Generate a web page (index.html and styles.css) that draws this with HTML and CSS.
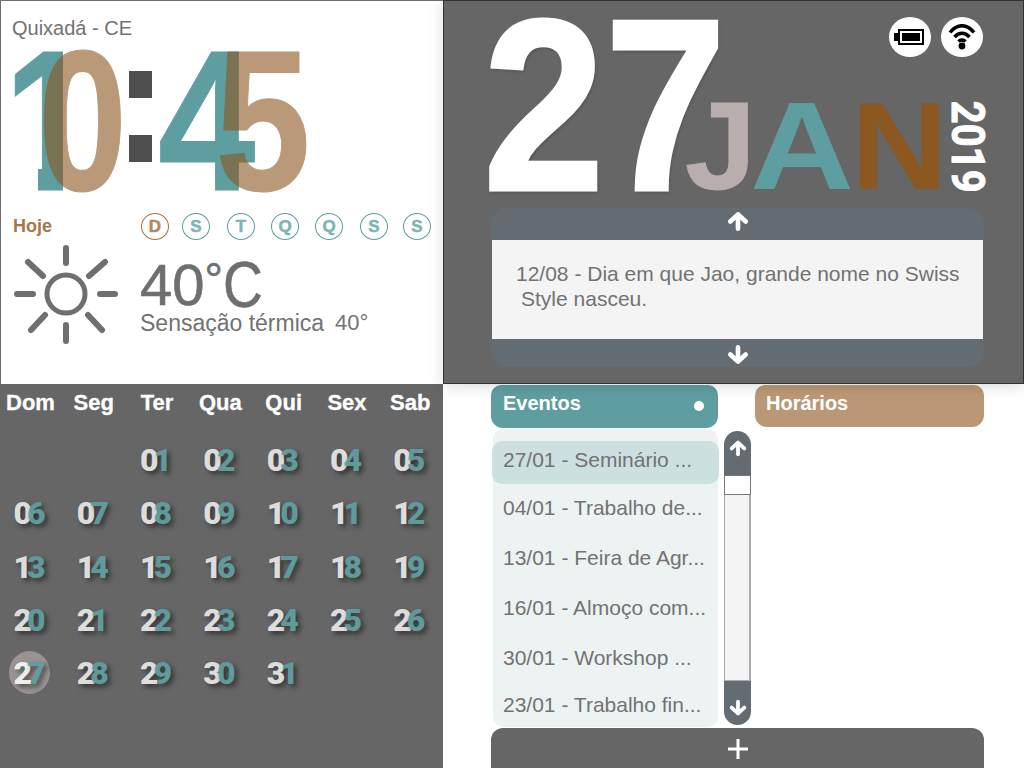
FILE: index.html
```html
<!DOCTYPE html>
<html lang="pt">
<head>
<meta charset="utf-8">
<title>Painel</title>
<link rel="stylesheet" href="styles.css">
</head>
<body>
<main class="page">
  <section class="clock">
    <div class="place">Quixadá - CE</div>
    <div class="time">
      <span class="digit d1 teal">1</span><span class="digit d2 tan">0</span><span class="colon"><i></i><i></i></span><span class="digit d4 teal">4</span><span class="digit d5 tan">5</span>
    </div>
    <div class="days">
      <span class="today">Hoje</span>
      <div class="day-list">
        <span class="day on">D</span><span class="day">S</span><span class="day">T</span><span class="day">Q</span><span class="day">Q</span><span class="day">S</span><span class="day">S</span>
      </div>
    </div>
    <div class="weather">
      <svg class="sun" width="106" height="102" viewBox="0 0 106 102" fill="none" stroke="#6f6f6f" stroke-linecap="round">
        <circle cx="53" cy="51" r="19" stroke-width="5"/>
        <path stroke-width="6" d="M53 5V20M53 82V98M4 51H20M87 51H102M15 19L30 33M92 19L76 33M32 72L18 87M75 72L89 87"/>
      </svg>
      <div class="temps">
        <div class="temp"><span>40</span><span class="deg">°</span><span class="cel">C</span></div>
        <div class="feel"><span>Sensação térmica</span><span class="feel-val">40°</span></div>
      </div>
    </div>
  </section>

  <section class="today-panel">
    <div class="date-row">
      <div class="date-num">27</div>
      <div class="date-side">
        <div class="status">
          <span class="badge">
            <svg width="32" height="18" viewBox="0 0 32 18"><path d="M0 5h4V1h26v16H4v-4H0z" fill="#000"/><rect x="6" y="3" width="22" height="12" fill="#fff"/><rect x="8" y="5" width="18" height="8" fill="#000"/></svg>
          </span>
          <span class="badge">
            <svg width="28" height="26" viewBox="0 0 28 26" fill="none" stroke="#000" stroke-width="3.6"><path d="M2 8.500C9-.5 19-.5 26 8.500M6.500 13C11 8 17 8 21.500 13M10.500 17.500C12.500 15.500 15.500 15.500 17.500 17.500"/><circle cx="14" cy="22" r="3.400" fill="#000" stroke="none"/></svg>
          </span>
        </div>
        <div class="month-row">
          <div class="month"><span class="m-j">J</span><span class="m-a">A</span><span class="m-n">N</span></div>
          <div class="year">2019</div>
        </div>
      </div>
    </div>
    <div class="note">
      <div class="note-cap top">
        <svg class="arrow" width="22" height="20" viewBox="0 0 20 18" fill="none" stroke="#fff" stroke-width="4.200" stroke-linecap="round" stroke-linejoin="round"><path d="M10 16V3M3 9.500L10 3l7 6.500"/></svg>
      </div>
      <p class="note-text">12/08 - Dia em que Jao, grande nome no Swiss<br><span class="indent">Style nasceu.</span></p>
      <div class="note-cap bottom">
        <svg class="arrow" width="22" height="20" viewBox="0 0 20 18" fill="none" stroke="#fff" stroke-width="4.200" stroke-linecap="round" stroke-linejoin="round"><path d="M10 2V15M3 8.500L10 15l7-6.500"/></svg>
      </div>
    </div>
  </section>

  <section class="calendar">
    <div class="cal-grid head">
      <span>Dom</span><span>Seg</span><span>Ter</span><span>Qua</span><span>Qui</span><span>Sex</span><span>Sab</span>
    </div>
    <div class="cal-grid dates">
      <span></span><span></span>
      <span class="n"><b>0</b><b>1</b></span><span class="n"><b>0</b><b>2</b></span><span class="n"><b>0</b><b>3</b></span><span class="n"><b>0</b><b>4</b></span><span class="n"><b>0</b><b>5</b></span>
      <span class="n"><b>0</b><b>6</b></span><span class="n"><b>0</b><b>7</b></span><span class="n"><b>0</b><b>8</b></span><span class="n"><b>0</b><b>9</b></span><span class="n"><b>1</b><b>0</b></span><span class="n"><b>1</b><b>1</b></span><span class="n"><b>1</b><b>2</b></span>
      <span class="n"><b>1</b><b>3</b></span><span class="n"><b>1</b><b>4</b></span><span class="n"><b>1</b><b>5</b></span><span class="n"><b>1</b><b>6</b></span><span class="n"><b>1</b><b>7</b></span><span class="n"><b>1</b><b>8</b></span><span class="n"><b>1</b><b>9</b></span>
      <span class="n"><b>2</b><b>0</b></span><span class="n"><b>2</b><b>1</b></span><span class="n"><b>2</b><b>2</b></span><span class="n"><b>2</b><b>3</b></span><span class="n"><b>2</b><b>4</b></span><span class="n"><b>2</b><b>5</b></span><span class="n"><b>2</b><b>6</b></span>
      <span class="n current"><b>2</b><b>7</b></span><span class="n"><b>2</b><b>8</b></span><span class="n"><b>2</b><b>9</b></span><span class="n"><b>3</b><b>0</b></span><span class="n"><b>3</b><b>1</b></span>
    </div>
  </section>

  <section class="agenda">
    <div class="tabs">
      <div class="tab events"><span>Eventos</span><i class="dot"></i></div>
      <div class="tab hours"><span>Horários</span></div>
    </div>
    <div class="lists">
      <ul class="event-list">
        <li class="sel">27/01 - Seminário ...</li>
        <li class="second">04/01 - Trabalho de...</li>
        <li>13/01 - Feira de Agr...</li>
        <li>16/01 - Almoço com...</li>
        <li>30/01 - Workshop ...</li>
        <li class="last">23/01 - Trabalho fin...</li>
      </ul>
      <div class="scroll">
        <div class="s-cap up">
          <svg width="18" height="18" viewBox="0 0 20 18" fill="none" stroke="#fff" stroke-width="4.200" stroke-linecap="round" stroke-linejoin="round"><path d="M10 16V3M3 9.500L10 3l7 6.500"/></svg>
        </div>
        <div class="thumb"></div>
        <div class="track"></div>
        <div class="s-cap down">
          <svg width="18" height="18" viewBox="0 0 20 18" fill="none" stroke="#fff" stroke-width="4.200" stroke-linecap="round" stroke-linejoin="round"><path d="M10 2V15M3 8.500L10 15l7-6.500"/></svg>
        </div>
      </div>
    </div>
    <div class="add">
      <svg width="22" height="22" viewBox="0 0 22 22" stroke="#fff" stroke-width="3"><path d="M11 1V21M1 11H21"/></svg>
    </div>
  </section>
</main>
</body>
</html>
```
FILE: styles.css
```css
* { box-sizing: border-box; }
html, body { margin: 0; padding: 0; }
body {
  width: 1024px;
  height: 768px;
  overflow: hidden;
  background: #fff;
  font-family: "Liberation Sans", Arial, sans-serif;
  color: #727272;
}
.page {
  display: grid;
  grid-template-columns: 443px 581px;
  grid-template-rows: 384px 384px;
  width: 1024px;
  height: 768px;
}

/* Clock */
.clock {
  background: #fff;
  border: 1px solid #6f6f6f;
  border-bottom: 0;
  border-right: 0;
  padding: 14px 0 0 11px;
}
.place { font-size: 20px; line-height: 26px; }
.time { display: flex; height: 150px; margin-top: 5px; }
.digit {
  display: block;
  flex: none;
  font-size: 200px;
  line-height: 150px;
  font-weight: 700;
  transform-origin: 0 50%;
  -webkit-text-stroke: 1px currentColor;
}
.teal { color: #5f9ea0; }
.tan { color: #8b5720; opacity: .6; }
.d1 {
  width: 34px;
  margin-left: -8px;
  transform: scaleX(.82);
  clip-path: polygon(0 0, 72px 0, 72px 160px, 41.500px 160px, 41.500px 110px, 0 110px);
}
.d2 { width: 91px; transform: scaleX(.8); }
.colon { display: flex; flex-direction: column; width: 29px; padding-top: 25px; gap: 37px; flex: none; }
.colon i { display: block; width: 23px; height: 27px; background: #4f4f4f; }
.d4 { width: 57px; transform: scaleX(.875); }
.d5 { width: 80px; transform: scaleX(.86); }

.days { display: flex; align-items: center; height: 27px; margin-top: 17px; padding-left: 1px; }
.today { width: 128px; font-size: 18px; font-weight: 700; color: #a9754a; }
.day-list { display: flex; gap: 16px; }
.day {
  display: flex;
  align-items: center;
  justify-content: center;
  flex: none;
  width: 28px;
  height: 27px;
  border: 1px solid #5f9ea0;
  border-radius: 50%;
  font-size: 17px;
  font-weight: 700;
  color: #7fb4b5;
  -webkit-text-stroke: .5px currentColor;
}
.day.on { margin-right: -3px; border-color: #a9703a; color: #b4875c; }
.day:nth-child(3), .day:nth-child(6) { margin-left: 1px; }
.day:nth-child(7) { margin-left: -1px; }

.weather { display: flex; margin-top: 3px; }
.sun { flex: none; margin-left: 1px; }
.temps { margin-left: 21px; padding-top: 14px; }
.temp { display: flex; font-size: 58px; line-height: 56px; color: #6f6f6f; -webkit-text-stroke: .6px #6f6f6f; }
.deg { font-size: 46px; line-height: 46px; width: 18px; }
.cel { font-size: 64px; transform: scaleX(.86); transform-origin: 0 50%; }
.feel { display: flex; gap: 11px; font-size: 23px; line-height: 24px; margin-top: -2px; }
.feel-val { font-size: 22px; }

/* Date */
.today-panel {
  position: relative;
  z-index: 2;
  background: #666;
  border: 1px solid #333;
  padding: 3px 39px 0 39px;
  box-shadow: 0 2px 14px rgba(0,0,0,.15);
}
.date-row { display: flex; height: 200px; }
.date-num {
  flex: none;
  width: 202px;
  font-size: 245px;
  line-height: 203px;
  font-weight: 700;
  color: #fff;
  transform: scaleX(.893);
  transform-origin: 0 50%;
  -webkit-text-stroke: 3px #fff;
  text-shadow: 1px 2px 4px rgba(0,0,0,.3);
}
.date-side { display: flex; flex-direction: column; justify-content: space-between; flex: 1; }
.status { display: flex; justify-content: flex-end; gap: 10px; padding: 13px 0 0; margin-right: 3px; }
.badge {
  display: flex;
  align-items: center;
  justify-content: center;
  width: 42px;
  height: 40px;
  border-radius: 50%;
  background: #fff;
}
.month-row { display: flex; align-items: flex-end; height: 116px; }
.month { display: flex; font-size: 124px; line-height: 116px; font-weight: 700; width: 265px; }
.m-j, .m-a, .m-n { display: block; flex: none; transform-origin: 0 50%; }
.m-j { color: #b9aeae; width: 65px; transform: scaleX(1.03); -webkit-text-stroke: 1px #b9aeae; }
.m-a { color: #5f9ea0; width: 101px; transform: scaleX(1.16); }
.m-n { color: #8c5721; transform: scaleX(1.08); }
.year {
  writing-mode: vertical-rl;
  font-family: Roboto, "Liberation Sans", sans-serif;
  font-size: 46px;
  line-height: 36px;
  font-weight: 700;
  color: #fff;
  transform: scaleY(.87);
  transform-origin: 50% 100%;
  height: 116px;
  margin-bottom: 11px;
  text-align: right;
  -webkit-text-stroke: 1px #fff;
}
.note { margin: 4px 0 0 8px; }
.note-cap { display: flex; justify-content: center; align-items: center; background: #636b73; }
.note-cap.top { height: 32px; border-radius: 16px 16px 0 0; padding-bottom: 6px; }
.note-cap.bottom { height: 28px; border-radius: 0 0 16px 16px; padding-top: 3px; }
.note-text {
  margin: 0 1px;
  height: 99px;
  padding: 21px 10px 0 24px;
  background: #f4f4f4;
  font-size: 21px;
  line-height: 25px;
  white-space: nowrap;
}
.indent { margin-left: 5px; }

/* Calendar */
.calendar { background: #666; padding-top: 1px; }
.cal-grid { display: grid; grid-template-columns: repeat(7, 59px); column-gap: 4.3px; justify-items: center; }
.head { height: 36px; padding-left: 1px; font-size: 22px; line-height: 36px; font-weight: 700; color: #fff; -webkit-text-stroke: .3px #fff; }
.dates { grid-auto-rows: 53.3px; margin-top: 17px; }
.n { display: flex; align-items: center; justify-content: center; font-family: Roboto, "Liberation Sans", sans-serif; font-size: 32px; font-weight: 900; line-height: 44px; height: 44px; }
.n b { font-weight: 900; color: #ddd; text-shadow: 3px 3px 5px rgba(0,0,0,.5); }
.n b + b { margin-left: -5px; color: #5f9ea0; opacity: .95; }
.current { width: 41px; height: 43px; border-radius: 50%; background: #9a9391; }
.current b { color: #eee; }

/* Agenda */
.agenda { display: flex; flex-direction: column; padding: 1px 40px 0 48px; background: #fff; }
.tabs { display: flex; gap: 37px; }
.tab { display: flex; align-items: center; justify-content: space-between; height: 43px; font-size: 20px; font-weight: 700; color: #fff; padding-bottom: 7px; }
.events { width: 227px; background: #5f9ea0; padding-left: 12px; padding-right: 14px; border-radius: 10px 10px 12px 12px; }
.hours { width: 229px; height: 42px; background: #bb9875; padding: 0 0 6px 11px; border-radius: 10px 10px 12px 12px; }
.dot { display: block; width: 10px; height: 10px; border-radius: 50%; background: #fff; margin-top: 5px; }
.lists { display: flex; height: 299px; margin-top: 1px; }
.event-list {
  list-style: none;
  margin: 0 0 0 2px;
  padding: 12px 0 0;
  width: 225px;
  height: 298px;
  background: #edf3f3;
  border-radius: 10px;
  font-size: 21px;
}
.event-list li { height: 50px; line-height: 50px; padding-left: 10px; white-space: nowrap; }
.event-list .sel { height: 43px; line-height: 38px; margin: 0 -1px; padding-left: 11px; background: #cde0e0; border-radius: 10px; }
.event-list .second { height: 49px; line-height: 47px; }
.event-list .last { height: 44px; line-height: 44px; }
.scroll { display: flex; flex-direction: column; width: 27px; height: 294px; margin: 2px 0 0 6px; }
.s-cap { display: flex; justify-content: center; background: #636b73; height: 44px; flex: none; }
.s-cap.up { border-radius: 14px 14px 0 0; padding-top: 8px; }
.s-cap.down { border-radius: 0 0 14px 14px; padding-top: 18px; }
.thumb { height: 20px; background: #fff; border: 1px solid #777; flex: none; }
.track { flex: 1; background: #f4f4f4; border: solid #aaa; border-width: 0 2px 1px 1px; }
.add { display: flex; align-items: center; justify-content: center; height: 40px; margin-top: 1px; background: #666; border-radius: 12px 12px 0 0; padding-top: 2px; }
```
